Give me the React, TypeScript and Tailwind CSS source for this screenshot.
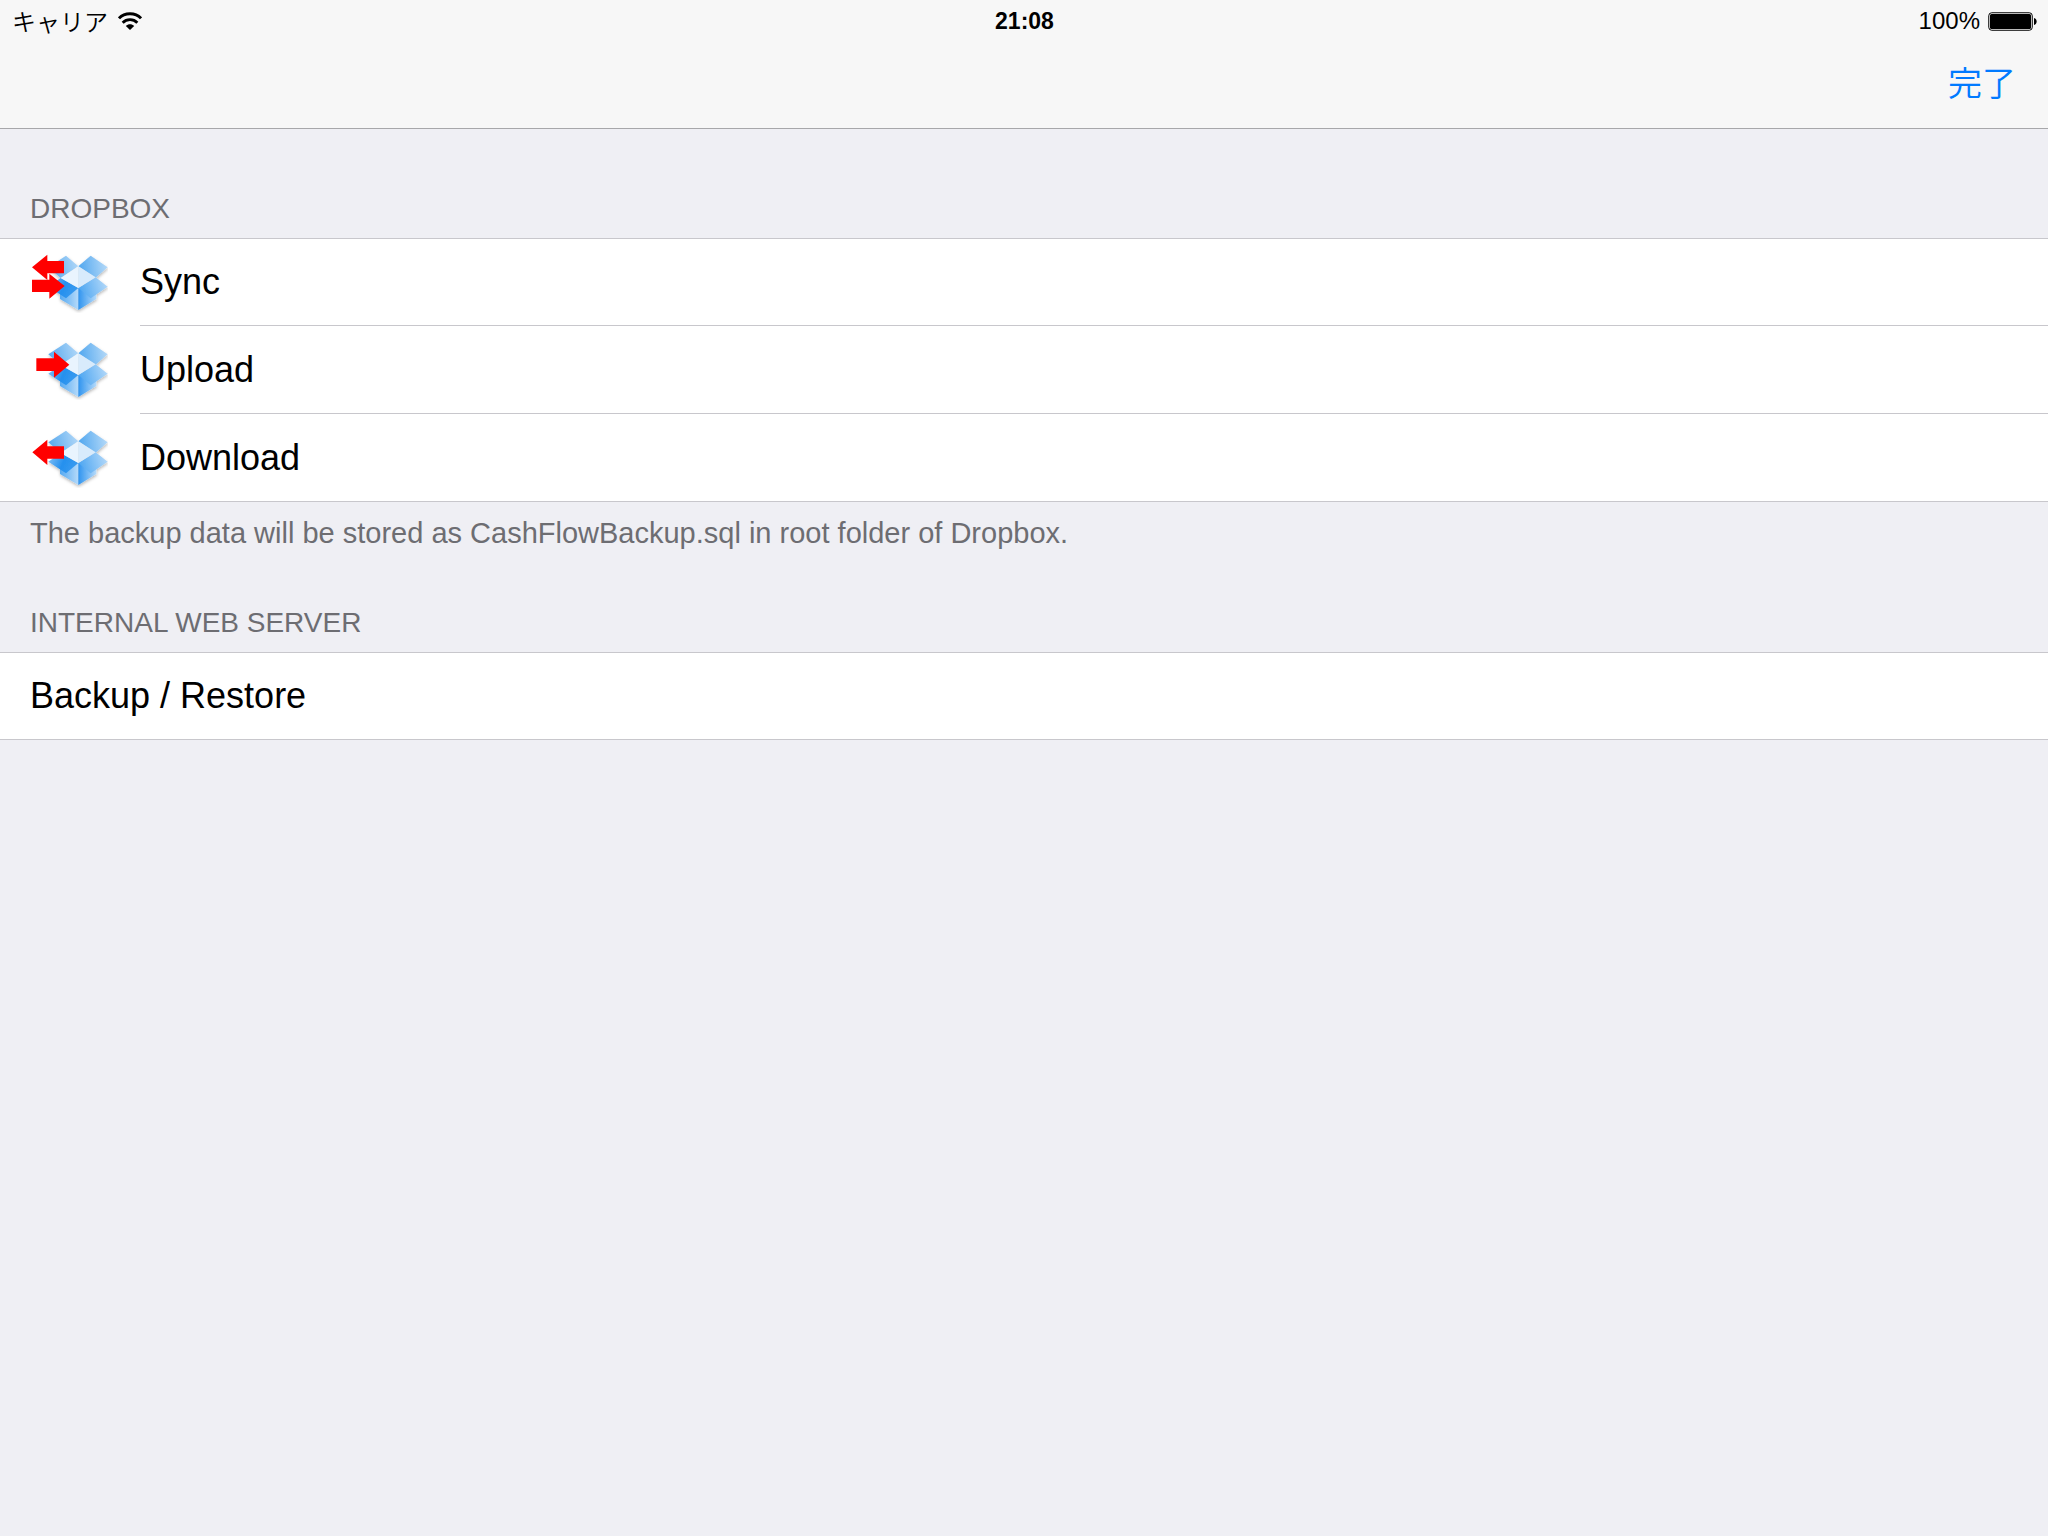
import { useId } from "react";
import type { ReactNode } from "react";

type ArrowKind = "sync" | "upload" | "download";

const arrows: Record<ArrowKind, string[]> = {
  sync: [
    "36,85 82,47 82,66 132,66 132,103 82,103 82,123",
    "36,122 88,122 88,104 134,141 88,179 88,159 36,159",
  ],
  upload: ["49,97 102,97 102,77 148,116 102,155 102,135 49,135"],
  download: ["37,115 82,77 82,97 132,97 132,134 82,134 82,153"],
};

function BoxIcon({ kind }: { kind: ArrowKind }) {
  const id = useId();
  const fill = (name: string) => `url(#${id}${name})`;
  return (
    <svg className="h-[60px] w-[76px] shrink-0" viewBox="36 42 228 180" aria-hidden="true">
      <defs>
        <linearGradient id={`${id}tl`} x1="0" y1="0.6" x2="1" y2="0.4">
          <stop offset="0" stopColor="#55a8ee" />
          <stop offset="1" stopColor="#b0d7f8" />
        </linearGradient>
        <linearGradient id={`${id}tr`} x1="0" y1="0.6" x2="1" y2="0.5">
          <stop offset="0" stopColor="#4fa6ef" />
          <stop offset="1" stopColor="#b4d9f8" />
        </linearGradient>
        <linearGradient id={`${id}bl`} x1="0" y1="0.3" x2="1" y2="0.6">
          <stop offset="0" stopColor="#7cbdf4" />
          <stop offset="0.5" stopColor="#2590ee" />
          <stop offset="1" stopColor="#3b9cf0" />
        </linearGradient>
        <linearGradient id={`${id}br`} x1="0" y1="0.6" x2="1" y2="0.4">
          <stop offset="0" stopColor="#4ba5f1" />
          <stop offset="1" stopColor="#b2d8f9" />
        </linearGradient>
        <linearGradient id={`${id}fl`} x1="0" y1="0" x2="1" y2="0">
          <stop offset="0" stopColor="#55a9f1" />
          <stop offset="1" stopColor="#b5dafa" />
        </linearGradient>
        <linearGradient id={`${id}fr`} x1="0" y1="0" x2="1" y2="0">
          <stop offset="0" stopColor="#2f94ef" />
          <stop offset="1" stopColor="#b5dafa" />
        </linearGradient>
        <filter id={`${id}sh`} x="-20%" y="-20%" width="140%" height="140%">
          <feDropShadow dx="1" dy="5" stdDeviation="4" floodColor="#000000" floodOpacity="0.28" />
        </filter>
      </defs>
      <g filter={fill("sh")}>
        <polygon points="120,150 175,147 175,213 120,180" fill={fill("fl")} />
        <polygon points="175,147 229,150 229,180 175,213" fill={fill("fr")} />
        <polygon points="85,85 138,50 175,82 122,117" fill={fill("tl")} />
        <polygon points="212,50 263,85 227,116 175,82" fill={fill("tr")} />
        <polygon points="122,117 175,147 138,178 85,143" fill={fill("bl")} />
        <polygon points="227,115 263,143 212,178 175,147" fill={fill("br")} />
        <polygon points="175,82 175,147 122,117" fill="#e9f4fe" />
        <polygon points="175,82 227,115 175,147" fill="#d8ebfc" />
      </g>
      {arrows[kind].map((points) => (
        <polygon key={points} points={points} fill="#ff0000" />
      ))}
    </svg>
  );
}

function WifiIcon() {
  return (
    <svg className="h-[18px] w-6" viewBox="0 0 72 54" fill="none" stroke="#000" strokeWidth="8.500" aria-hidden="true">
      <path d="M3 19 C20 0.500 52 0.500 69 19" />
      <path d="M14 32 C26 20 46 20 58 32" />
      <path d="M36 54 L23.500 42 C30 35 42 35 48.500 42 Z" fill="#000" stroke="none" />
    </svg>
  );
}

function BatteryIcon() {
  return (
    <svg className="h-[19px] w-[49px]" viewBox="0 0 49 19" aria-hidden="true">
      <rect x="0.750" y="0.750" width="43.500" height="17.500" rx="3" fill="none" stroke="#000" strokeWidth="1" />
      <rect x="2" y="2" width="41" height="15" rx="1.500" fill="#000" />
      <path d="M46 6 C49.500 6.500 49.500 12.500 46 13 Z" fill="#000" />
    </svg>
  );
}

function Section({ title, note, children }: { title: string; note?: string; children: ReactNode }) {
  return (
    <section>
      <h2 className="px-[30px] pb-[11px] text-[28px] leading-9 text-[#6d6d72] uppercase">{title}</h2>
      <ul className="border-y border-[#c8c7cc] bg-white">{children}</ul>
      {note && <p className="px-[30px] pt-[13px] text-[29px] leading-9 text-[#6d6d72]">{note}</p>}
    </section>
  );
}

const actions: { kind: ArrowKind; label: string }[] = [
  { kind: "sync", label: "Sync" },
  { kind: "upload", label: "Upload" },
  { kind: "download", label: "Download" },
];

export default function App() {
  return (
    <div className="min-h-screen bg-[#efeff4] font-['Liberation_Sans','Noto_Sans_CJK_JP',sans-serif] text-black">
      <header className="border-b border-[#a7a7aa] bg-[#f7f7f7]">
        <div className="grid h-10 grid-cols-3 items-center pr-[11px] pl-3 text-2xl leading-10">
          <div className="flex items-center gap-2.5">
            <span className="font-['Noto_Sans_CJK_JP',sans-serif] leading-[38px] font-[350]">キャリア</span>
            <WifiIcon />
          </div>
          <time className="text-center text-[23px] leading-[42px] font-bold">21:08</time>
          <div className="flex items-center justify-end gap-2">
            <span>100%</span>
            <BatteryIcon />
          </div>
        </div>
        <nav className="flex h-[88px] items-start justify-end px-8">
          <button
            type="button"
            className="font-['Noto_Sans_CJK_JP',sans-serif] text-[34px] leading-[84px] font-[350] text-[#007aff]"
          >
            完了
          </button>
        </nav>
      </header>

      <main className="flex flex-col gap-[54px] pt-[62px]">
        <Section title="Dropbox" note="The backup data will be stored as CashFlowBackup.sql in root folder of Dropbox.">
          {actions.map(({ kind, label }) => (
            <li key={kind} className="group">
              <button type="button" className="flex w-full items-center gap-8 pl-8 text-left text-4xl">
                <BoxIcon kind={kind} />
                <span className="flex h-[88px] flex-1 items-center border-b border-[#c8c7cc] group-first:h-[87px] group-last:h-[87px] group-last:border-b-0">
                  {label}
                </span>
              </button>
            </li>
          ))}
        </Section>
        <Section title="Internal Web Server">
          <li>
            <button type="button" className="flex h-[86px] w-full items-center px-[30px] text-left text-4xl">
              Backup / Restore
            </button>
          </li>
        </Section>
      </main>
    </div>
  );
}
